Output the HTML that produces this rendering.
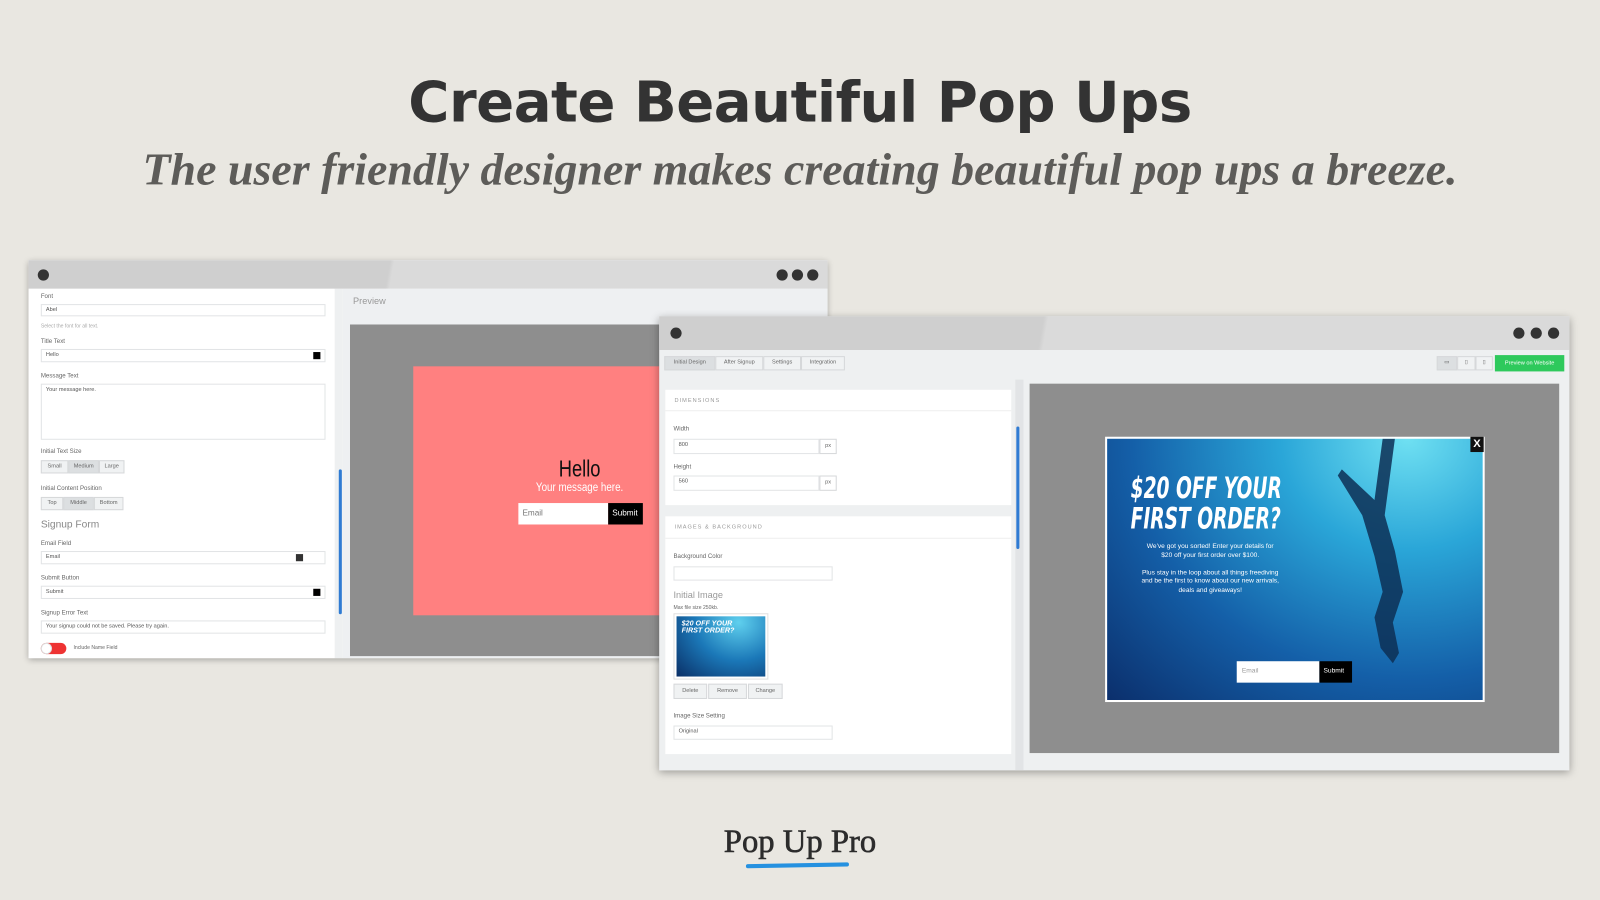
<!DOCTYPE html>
<html><head><meta charset="utf-8"><style>
*{margin:0;padding:0;box-sizing:border-box}
html,body{width:1600px;height:900px;overflow:hidden;background:#e9e7e1}
#s{position:absolute;left:0;top:0;width:1568px;height:882px;transform:scale(1.020408);transform-origin:0 0;font-family:"Liberation Sans",sans-serif}
.a{position:absolute}
.t{font-size:6px;color:#666}
.inp{position:absolute;background:#fff;border:1px solid #e2e4e6;font-size:5.5px;color:#555;padding:2px 4px}
.btn{position:absolute;background:#f0f2f3;border:1px solid #d6d8da;font-size:5.5px;color:#666;text-align:center;line-height:11px}
.dot{position:absolute;width:11px;height:11px;border-radius:50%;background:#333}
</style></head><body><div id="s">
<div class="a" style="left:0;top:68px;width:1568px;text-align:center;font-family:'DejaVu Sans',sans-serif;font-weight:bold;font-size:55px;color:#333;letter-spacing:-0.5px">Create Beautiful Pop Ups</div>
<div class="a" style="left:0;top:140px;width:1568px;text-align:center;font-family:'Liberation Serif',serif;font-style:italic;font-weight:bold;font-size:45px;color:#5d5c59">The user friendly designer makes creating beautiful pop ups a breeze.</div>

<!-- left window -->
<div class="a" style="left:28px;top:255px;width:783px;height:390px;background:#fff;box-shadow:0 2px 6px rgba(0,0,0,.3)">
 <div class="a" style="left:0;top:0;width:783px;height:28px;background:linear-gradient(100deg,#cfcfcf 0,#cfcfcf 45%,#dadada 45.5%,#dadada 100%)"></div>
 <div class="dot" style="left:9px;top:9px"></div>
 <div class="dot" style="left:733px;top:9px"></div><div class="dot" style="left:748px;top:9px"></div><div class="dot" style="left:763px;top:9px"></div>
 <div class="a" style="left:0;top:28px;width:300px;height:362px;background:#fff">
  <div class="t a" style="left:12px;top:5px">Font</div><div class="inp" style="left:12px;top:15px;width:279px;height:12px">Abel</div>
  <div class="t a" style="left:12px;top:34px;color:#aaa;font-size:5px">Select the font for all text.</div>
  <div class="t a" style="left:12px;top:49px">Title Text</div><div class="inp" style="left:12px;top:59px;width:279px;height:13px">Hello</div>
  <div class="a" style="left:279px;top:62px;width:7px;height:7px;background:#000"></div>
  <div class="t a" style="left:12px;top:83px">Message Text</div><div class="inp" style="left:12px;top:93px;width:279px;height:55px">Your message here.</div>
  <div class="t a" style="left:12px;top:157px">Initial Text Size</div>
  <div class="btn" style="left:12px;top:168px;width:27px;height:13px">Small</div><div class="btn" style="left:39px;top:168px;width:30px;height:13px;background:#dcdfe1">Medium</div><div class="btn" style="left:69px;top:168px;width:25px;height:13px">Large</div>
  <div class="t a" style="left:12px;top:193px">Initial Content Position</div>
  <div class="btn" style="left:12px;top:204px;width:22px;height:13px">Top</div><div class="btn" style="left:34px;top:204px;width:30px;height:13px;background:#dcdfe1">Middle</div><div class="btn" style="left:64px;top:204px;width:29px;height:13px">Bottom</div>
  <div class="a" style="left:12px;top:226px;font-size:10px;color:#888">Signup Form</div>
  <div class="t a" style="left:12px;top:247px">Email Field</div><div class="inp" style="left:12px;top:257px;width:279px;height:13px">Email</div>
  <div class="a" style="left:262px;top:260px;width:7px;height:7px;background:#333"></div>
  <div class="t a" style="left:12px;top:281px">Submit Button</div><div class="inp" style="left:12px;top:291px;width:279px;height:13px">Submit</div>
  <div class="a" style="left:279px;top:294px;width:7px;height:7px;background:#000"></div>
  <div class="t a" style="left:12px;top:315px">Signup Error Text</div><div class="inp" style="left:12px;top:325px;width:279px;height:13px">Your signup could not be saved. Please try again.</div>
  <div class="a" style="left:12px;top:347px;width:25px;height:11px;border-radius:6px;background:#e33"></div><div class="a" style="left:12px;top:347px;width:11px;height:11px;border-radius:50%;background:#fff;border:1px solid #ddd"></div>
  <div class="t a" style="left:44px;top:349px;font-size:5px">Include Name Field</div>
 </div>
 <div class="a" style="left:300px;top:28px;width:8px;height:362px;background:#eef0f1"></div>
 <div class="a" style="left:304px;top:205px;width:3px;height:142px;background:#2f7bd3;border-radius:2px"></div>
 <div class="a" style="left:308px;top:28px;width:475px;height:362px;background:#eef0f2"></div>
 <div class="a" style="left:318px;top:35px;font-size:9px;color:#999">Preview</div>
 <div class="a" style="left:315px;top:63px;width:468px;height:325px;background:#8e8e8e"></div>
 <div class="a" style="left:377px;top:104px;width:406px;height:244px;background:#ff8080"></div>
 <div class="a" style="left:480px;top:191px;width:120px;text-align:center;font-family:'Liberation Sans Narrow','Liberation Sans',sans-serif;font-size:23px;color:#111;transform:scaleX(0.78)">Hello</div>
 <div class="a" style="left:470px;top:215px;width:140px;text-align:center;font-family:'Liberation Sans Narrow','Liberation Sans',sans-serif;font-size:12px;color:#fff;transform:scaleX(0.8)">Your message here.</div>
 <div class="a" style="left:480px;top:238px;width:88px;height:21px;background:#fff;font-size:8px;color:#777;padding:5px 4px">Email</div>
 <div class="a" style="left:568px;top:238px;width:34px;height:21px;background:#000;font-size:8px;color:#fff;padding:5px 4px">Submit</div>
</div>

<!-- right window -->
<div class="a" style="left:646px;top:310px;width:892px;height:445px;background:#eef0f1;box-shadow:0 2px 8px rgba(0,0,0,.35)">
 <div class="a" style="left:0;top:0;width:892px;height:33px;background:linear-gradient(100deg,#cfcfcf 0,#cfcfcf 42%,#dadada 42.5%,#dadada 100%)"></div>
 <div class="dot" style="left:11px;top:11px"></div>
 <div class="dot" style="left:837px;top:11px"></div><div class="dot" style="left:854px;top:11px"></div><div class="dot" style="left:871px;top:11px"></div>
 <div class="btn" style="left:5px;top:39px;width:50px;height:14px;background:#dcdfe1">Initial Design</div>
 <div class="btn" style="left:55px;top:39px;width:47px;height:14px">After Signup</div>
 <div class="btn" style="left:102px;top:39px;width:37px;height:14px">Settings</div>
 <div class="btn" style="left:139px;top:39px;width:43px;height:14px">Integration</div>
 <div class="btn" style="left:762px;top:39px;width:20px;height:14px;background:#dcdfe1">▭</div>
 <div class="btn" style="left:782px;top:39px;width:18px;height:14px">▯</div>
 <div class="btn" style="left:800px;top:39px;width:17px;height:14px">▯</div>
 <div class="a" style="left:819px;top:38px;width:68px;height:16px;background:#2ec95c;color:#fff;font-size:5.5px;text-align:center;line-height:16px">Preview on Website</div>
 <div class="a" style="left:6px;top:72px;width:339px;height:113px;background:#fff"></div>
 <div class="a" style="left:6px;top:72px;width:339px;height:21px;border-bottom:1px solid #eee;font-size:5.5px;color:#999;letter-spacing:1px;padding:8px 9px">DIMENSIONS</div>
 <div class="t a" style="left:14px;top:108px">Width</div><div class="inp" style="left:14px;top:120px;width:143px;height:15px">800</div><div class="btn" style="left:157px;top:120px;width:17px;height:15px;background:#fff;line-height:13px">px</div>
 <div class="t a" style="left:14px;top:145px">Height</div><div class="inp" style="left:14px;top:156px;width:143px;height:15px">560</div><div class="btn" style="left:157px;top:156px;width:17px;height:15px;background:#fff;line-height:13px">px</div>
 <div class="a" style="left:6px;top:196px;width:339px;height:233px;background:#fff"></div>
 <div class="a" style="left:6px;top:196px;width:339px;height:22px;border-bottom:1px solid #eee;font-size:5.5px;color:#999;letter-spacing:1px;padding:8px 9px">IMAGES &amp; BACKGROUND</div>
 <div class="t a" style="left:14px;top:233px">Background Color</div><div class="inp" style="left:14px;top:245px;width:156px;height:14px"></div>
 <div class="a" style="left:14px;top:268px;font-size:9px;color:#999">Initial Image</div>
 <div class="t a" style="left:14px;top:283px;font-size:5px">Max file size 250kb.</div>
 <div class="a" style="left:14px;top:291px;width:93px;height:65px;background:#fff;border:1px solid #e0e0e0"></div>
 <div class="a" style="left:17px;top:294px;width:87px;height:59px;background:radial-gradient(ellipse at 70% 10%,#5fd0ee,#1b78b8 50%,#0a2f66)"></div>
 <div class="a" style="left:22px;top:298px;font-size:7px;font-style:italic;font-weight:bold;color:#fff;line-height:7px">$20 OFF YOUR<br>FIRST ORDER?</div>
 <div class="btn" style="left:14px;top:360px;width:33px;height:15px;line-height:13px">Delete</div><div class="btn" style="left:48px;top:360px;width:38px;height:15px;line-height:13px">Remove</div><div class="btn" style="left:87px;top:360px;width:34px;height:15px;line-height:13px">Change</div>
 <div class="t a" style="left:14px;top:389px">Image Size Setting</div><div class="inp" style="left:14px;top:401px;width:156px;height:14px">Original</div>
 <div class="a" style="left:349px;top:62px;width:8px;height:383px;background:#e2e4e6"></div>
 <div class="a" style="left:350px;top:108px;width:3px;height:120px;background:#2f7bd3;border-radius:2px"></div>
 <div class="a" style="left:363px;top:66px;width:519px;height:362px;background:#8e8e8e"></div>
 <div class="a" style="left:437px;top:118px;width:372px;height:260px;background:#fff"></div>
 <div class="a" style="left:439px;top:120px;width:368px;height:256px;background:radial-gradient(ellipse at 80% 0%,#6fe0f2 0%,#2aa6d8 30%,#145fa8 65%,#0b2f6c 100%)"></div>
 <svg class="a" style="left:439px;top:120px" width="368" height="256" viewBox="0 0 368 256"><path d="M270 0 L262 60 L230 30 L226 36 L250 75 L262 115 L270 150 L262 175 L268 205 L280 220 L286 210 L280 180 L290 150 L282 110 L272 75 L282 0 Z" fill="#0d2f55" opacity=".85"/></svg>
 <div class="a" style="left:795px;top:118px;width:13px;height:15px;background:#111;color:#fff;font-size:11px;font-weight:bold;text-align:center;line-height:15px">X</div>
 <div class="a" style="left:462px;top:153px;font-family:'DejaVu Sans Condensed','Liberation Sans Narrow',sans-serif;font-style:italic;font-weight:bold;font-size:29px;color:#fff;line-height:30px;transform:scaleX(0.7);transform-origin:0 0">$20 OFF YOUR<br>FIRST ORDER?</div>
 <div class="a" style="left:455px;top:222px;width:170px;text-align:center;font-size:6.5px;color:#fff;line-height:8.5px">We've got you sorted! Enter your details for<br>$20 off your first order over $100.<br><br>Plus stay in the loop about all things freediving<br>and be the first to know about our new arrivals,<br>deals and giveaways!</div>
 <div class="a" style="left:566px;top:338px;width:81px;height:21px;background:#fff;font-size:6.5px;color:#999;padding:6px 5px">Email</div>
 <div class="a" style="left:647px;top:338px;width:32px;height:21px;background:#000;font-size:6.5px;color:#fff;padding:6px 4px">Submit</div>
</div>

<div class="a" style="left:0;top:806px;width:1568px;text-align:center;font-family:'Liberation Serif',serif;font-size:32px;color:#2c2c2c;-webkit-text-stroke:0.6px #2c2c2c">Pop Up Pro</div>
<div class="a" style="left:731px;top:846px;width:101px;height:4px;background:#2591e0;border-radius:2px;transform:rotate(-1deg)"></div>
</div></body></html>
